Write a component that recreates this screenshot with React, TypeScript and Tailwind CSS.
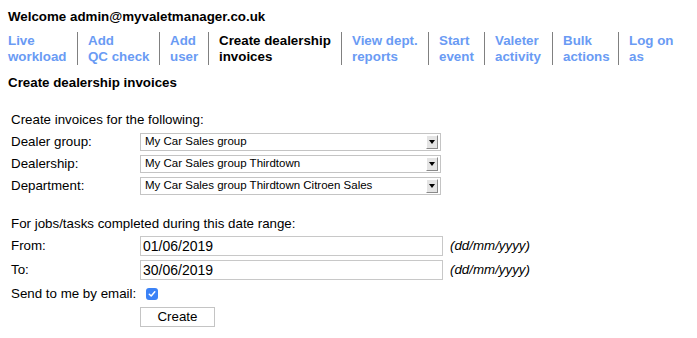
import React from 'react';

// widths include the right border so the separators fall where the screenshot has them
const navItems = [
  { label: ['Live', 'workload'], active: false, w: 'w-[70px]' },
  { label: ['Add', 'QC check'], active: false, w: 'w-[82px]' },
  { label: ['Add', 'user'], active: false, w: 'w-[49px]' },
  { label: ['Create dealership', 'invoices'], active: true, w: 'w-[133px]' },
  { label: ['View dept.', 'reports'], active: false, w: 'w-[87px]' },
  { label: ['Start', 'event'], active: false, w: 'w-[56px]' },
  { label: ['Valeter', 'activity'], active: false, w: 'w-[68px]' },
  { label: ['Bulk', 'actions'], active: false, w: 'w-[66px]' },
  { label: ['Log on', 'as'], active: false, w: 'w-[70px]' },
];

const FakeSelect: React.FC<{ value: string }> = ({ value }) => (
  <div className="flex h-[18px] w-[301px] items-center border border-[#c4c4c4] bg-white">
    <span className="flex-1 truncate pl-[4px] text-[11.5px] leading-none">{value}</span>
    <div className="mr-[2px] flex h-[14px] w-[12px] items-center justify-center border-t border-l border-t-white border-l-white border-r border-b border-r-[#8a8a8a] border-b-[#8a8a8a] bg-[#e4e4e4]">
      <span className="block h-0 w-0 border-x-[3px] border-t-[4px] border-x-transparent border-t-black" />
    </div>
  </div>
);

const DateInput: React.FC<{ value: string }> = ({ value }) => (
  <input
    readOnly
    value={value}
    className="h-[20px] w-[303px] border border-[#c8c8c8] px-[2px] text-[14px] text-black outline-none"
  />
);

export default function App() {
  return (
    <div className="min-h-screen bg-white p-2 pt-[9px] text-[13.33px] text-black" style={{ fontFamily: '"Liberation Sans", Arial, sans-serif' }}>
      <h1 className="text-[13.33px] font-bold leading-[15px]">Welcome admin@myvaletmanager.co.uk</h1>

      {/* nav */}
      <ul className="mt-[8px] flex">
        {navItems.map((item, i) => (
          <li
            key={i}
            className={`${item.w} ${i === 0 ? 'pl-0' : 'pl-[10px]'} ${i === navItems.length - 1 ? '' : 'border-r border-[#808080]'} h-[33px] shrink-0 pt-[1px] text-[13.33px] font-bold leading-[16px] ${item.active ? 'text-black' : 'text-[#6a9bf4]'}`}
          >
            {item.label[0]}
            <br />
            {item.label[1]}
          </li>
        ))}
      </ul>

      <h2 className="mt-[10px] text-[13.33px] font-bold leading-[15px]">Create dealership invoices</h2>

      <div className="pl-[3px]">
        <p className="mt-[22px] leading-[15px]">Create invoices for the following:</p>
        <div className="mt-[6px] flex flex-col gap-[4px] leading-[18px]">
          <div className="flex items-center">
            <span className="w-[129px]">Dealer group:</span>
            <FakeSelect value="My Car Sales group" />
          </div>
          <div className="flex items-center">
            <span className="w-[129px]">Dealership:</span>
            <FakeSelect value="My Car Sales group Thirdtown" />
          </div>
          <div className="flex items-center">
            <span className="w-[129px]">Department:</span>
            <FakeSelect value="My Car Sales group Thirdtown Citroen Sales" />
          </div>
        </div>

        <p className="mt-[21px] leading-[15px]">For jobs/tasks completed during this date range:</p>
        <div className="mt-[5px] flex flex-col gap-[4px] leading-[20px]">
          <div className="flex items-center">
            <span className="w-[129px]">From:</span>
            <DateInput value="01/06/2019" />
            <span className="ml-[7px] italic">(dd/mm/yyyy)</span>
          </div>
          <div className="flex items-center">
            <span className="w-[129px]">To:</span>
            <DateInput value="30/06/2019" />
            <span className="ml-[7px] italic">(dd/mm/yyyy)</span>
          </div>
          <div className="flex items-center">
            <span className="w-[129px]">Send to me by email:</span>
            <span className="ml-[6px] flex h-[12px] w-[12px] items-center justify-center rounded-[3px] bg-[#3b82f6]">
              <svg width="8" height="8" viewBox="0 0 8 8">
                <path d="M1.3 4.2 L3.2 6 L6.8 1.8" stroke="white" strokeWidth="1.5" fill="none" strokeLinecap="round" strokeLinejoin="round" />
              </svg>
            </span>
          </div>
          <div className="-mt-[1px] flex">
            <span className="w-[129px]" />
            <button className="h-[20px] w-[75px] border border-[#c4c4c4] bg-white text-[13.33px] leading-none text-black">Create</button>
          </div>
        </div>
      </div>
    </div>
  );
}
